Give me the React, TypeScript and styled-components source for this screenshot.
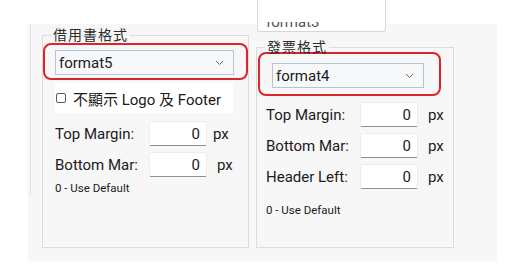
import styled, { createGlobalStyle } from 'styled-components'

const GlobalStyle = createGlobalStyle`
  body {
    margin: 0;
    background: #ffffff;
    font-family: Roboto, "Noto Sans CJK TC", sans-serif;
    color: #1b1b1b;
  }
`

const Chevron = () => (
  <svg width="9" height="6" viewBox="0 0 9 6">
    <polyline points="1,1 4.5,4.5 8,1" fill="none" stroke="#6b6b6b" strokeWidth="1" />
  </svg>
)

type FieldProps = { label: string; pxGap?: number }

const Field = ({ label, pxGap = 6 }: FieldProps) => (
  <Row>
    <Label>{label}</Label>
    <NumberBox defaultValue="0" />
    <Unit $gap={pxGap}>px</Unit>
  </Row>
)

const App = () => {
  return (
    <Page>
      <GlobalStyle />
      <Panel>
        <Edge />
        <LeftColumn>
          <Group $width={207}>
            <Legend>借用書格式</Legend>
            <Highlight $width={205} $height={37} $padTop={5} $padLeft={10}>
              <Select $width={179}>
                <span>format5</span>
                <Chevron />
              </Select>
            </Highlight>
            <CheckRow>
              <Check type="checkbox" />
              <span>不顯示 Logo 及 Footer</span>
            </CheckRow>
            <Fields $top={8} $left={12}>
              <Field label="Top Margin:" pxGap={6} />
              <Field label="Bottom Mar:" pxGap={10} />
            </Fields>
            <Note $top={3} $left={12}>0 - Use Default</Note>
          </Group>
        </LeftColumn>
        <RightColumn>
          <TopInput>
            <TextClip>
              <TopText>format3</TopText>
            </TextClip>
          </TopInput>
          <Group $width={198} $offset>
            <Legend>發票格式</Legend>
            <Highlight $width={183} $height={44} $padTop={9} $padLeft={12} $lift>
              <Select $width={152}>
                <span>format4</span>
                <Chevron />
              </Select>
            </Highlight>
            <Fields $top={6} $left={9}>
              <Field label="Top Margin:" pxGap={10} />
              <Field label="Bottom Mar:" pxGap={10} />
              <Field label="Header Left:" pxGap={10} />
            </Fields>
            <Note $top={13} $left={9}>0 - Use Default</Note>
          </Group>
        </RightColumn>
      </Panel>
    </Page>
  )
}

export default App

const Page = styled.div`
  padding: 24px 0 0 28px;
  height: 275px;
  box-sizing: border-box;
`

const Panel = styled.div`
  width: 469px;
  height: 237px;
  background: #f7f7f7;
  display: flex;
  align-items: flex-start;
`

const Edge = styled.div`
  width: 1px;
  height: 171px;
  margin-left: 2px;
  background: #e4e4e4;
`

const LeftColumn = styled.div`
  margin-left: 11px;
  margin-top: 3px;
`

const RightColumn = styled.div`
  margin-left: 7px;
  display: flex;
  flex-direction: column;
`

const TopInput = styled.div`
  width: 129px;
  height: 32px;
  margin: -24px 0 0 1px;
  background: #ffffff;
  border: 1px solid #d6d6d6;
  border-top: none;
  border-radius: 0 0 3px 3px;
  box-sizing: border-box;
`

const TextClip = styled.div`
  height: 7px;
  margin-top: 22px;
  overflow: hidden;
`

const TopText = styled.div`
  margin-top: -9px;
  padding-left: 8px;
  font-size: 15px;
  line-height: 18px;
  color: #555;
`

const Group = styled.fieldset<{ $width: number; $offset?: boolean }>`
  width: ${p => p.$width}px;
  height: ${p => (p.$offset ? 209 : 221)}px;
  margin: ${p => (p.$offset ? '7px 0 0 0' : '0')};
  padding: 0;
  border: 1px solid #dcdcdc;
  box-sizing: border-box;
  min-width: 0;
`

const Legend = styled.legend`
  margin-left: 8px;
  padding: 0 2px;
  font-size: 14px;
  line-height: 16px;
  color: #2a2a2a;
  letter-spacing: 1px;
`

const Highlight = styled.div<{
  $width: number
  $height: number
  $padTop: number
  $padLeft: number
  $lift?: boolean
}>`
  width: ${p => p.$width}px;
  height: ${p => p.$height}px;
  margin: ${p => (p.$lift ? '-3px 0 0 1px' : '0')};
  padding: ${p => p.$padTop}px 0 0 ${p => p.$padLeft}px;
  border: 2px solid #d9262e;
  border-radius: 8px;
  box-sizing: border-box;
`

const Select = styled.div<{ $width: number }>`
  width: ${p => p.$width}px;
  height: 25px;
  display: flex;
  align-items: center;
  justify-content: space-between;
  padding: 0 9px 0 3px;
  box-sizing: border-box;
  background: #f6f8fa;
  border: 1px solid #b3c5d6;
  font-size: 15px;
  color: #1b1b1b;
`

const CheckRow = styled.label`
  display: flex;
  align-items: center;
  gap: 7px;
  width: 178px;
  height: 30px;
  margin: 3px 0 0 12px;
  padding-left: 1px;
  box-sizing: border-box;
  background: #ffffff;
  font-size: 15px;
  white-space: nowrap;
`

const Check = styled.input`
  appearance: none;
  width: 10px;
  height: 10px;
  margin: 0;
  border: 1px solid #5a5a5a;
  border-radius: 2px;
  background: #ffffff;
`

const Fields = styled.div<{ $top: number; $left: number }>`
  display: flex;
  flex-direction: column;
  gap: 6px;
  margin: ${p => p.$top}px 0 0 ${p => p.$left}px;
`

const Row = styled.div`
  display: flex;
  align-items: center;
  height: 25px;
`

const Label = styled.span`
  width: 94px;
  font-size: 15px;
  white-space: nowrap;
`

const NumberBox = styled.input`
  width: 58px;
  height: 25px;
  box-sizing: border-box;
  border: 1px solid #ececec;
  border-bottom-color: #8f8f8f;
  border-radius: 2px;
  background: #ffffff;
  text-align: right;
  padding: 0 6px 0 0;
  font-family: inherit;
  font-size: 15px;
  color: #1b1b1b;
`

const Unit = styled.span<{ $gap: number }>`
  margin-left: ${p => p.$gap}px;
  font-size: 15px;
`

const Note = styled.div<{ $top: number; $left: number }>`
  margin: ${p => p.$top}px 0 0 ${p => p.$left}px;
  font-size: 11.5px;
  line-height: 16px;
  color: #1b1b1b;
`
